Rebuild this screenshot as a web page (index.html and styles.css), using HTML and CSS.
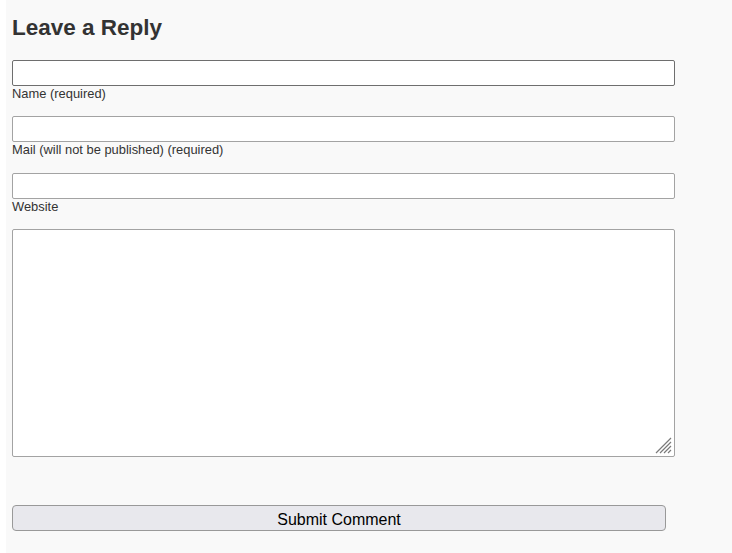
FILE: index.html
```html
<!DOCTYPE html>
<html lang="en">
<head>
    <meta charset="UTF-8">
    <meta name="viewport" content="width=device-width, initial-scale=1.0">
    <title>Leave a Reply</title>
    <link rel="stylesheet" href="styles.css">
</head>
<body>
    <div class="page">
        <div class="respond">
            <h3 class="reply-title">Leave a Reply</h3>
            <form class="comment-form" action="#" method="post">
                <div class="field">
                    <input type="text" id="author" name="author" class="active">
                    <label for="author">Name (required)</label>
                </div>
                <div class="field">
                    <input type="text" id="email" name="email">
                    <label for="email">Mail (will not be published) (required)</label>
                </div>
                <div class="field">
                    <input type="text" id="url" name="url">
                    <label for="url">Website</label>
                </div>
                <div class="comment-box">
                    <textarea id="comment" name="comment"></textarea>
                    <!-- resize grip -->
                    <svg class="grip" width="18" height="18" viewBox="0 0 18 18">
                        <path d="M2 17 L17 2 M6 17 L17 6 M10 17 L17 10 M14 17 L17 14" stroke="#7a7a7a" stroke-width="1.2" fill="none"/>
                    </svg>
                </div>
                <button type="submit" class="submit">Submit Comment</button>
            </form>
        </div>
    </div>
</body>
</html>
```

FILE: styles.css
```css
body {
    margin: 0;
    padding: 0;
    background-color: #fff;
    font-family: 'Liberation Sans', Arial, sans-serif;
    color: #333;
}
.page {
    margin-left: 6px;
    min-height: 553px;
    background-color: #f9f9f9;
}
.respond {
    padding: 15px 0 0 6px;
    width: 663px;
}
.reply-title {
    margin: 0 0 19px 0;
    font-size: 22.5px;
    line-height: 26px;
    font-weight: bold;
    color: #333;
}
.field {
    height: 40px;
    margin-bottom: 16px;
}
.field:nth-child(2) {
    margin-bottom: 17px;
}
.field input {
    display: block;
    box-sizing: border-box;
    width: 663px;
    height: 26px;
    margin: 0;
    padding: 2px 4px;
    border: 1px solid #a3a3a3;
    border-radius: 2px;
    background-color: #fff;
    font-family: inherit;
    font-size: 13px;
}
.field input.active {
    border-color: #6e6e6e;
}
.field label {
    display: block;
    font-size: 12.9px;
    line-height: 14px;
    padding-top: 1px;
    color: #333;
}
.comment-box {
    position: relative;
    width: 663px;
}
textarea {
    display: block;
    box-sizing: border-box;
    width: 663px;
    height: 228px;
    margin: 0;
    border: 1px solid #a3a3a3;
    border-radius: 2px;
    background-color: #fff;
    resize: none;
}
.grip {
    position: absolute;
    right: 3px;
    bottom: 3px;
    pointer-events: none;
}
.submit {
    display: block;
    box-sizing: border-box;
    width: 654px;
    height: 26px;
    margin-top: 48px;
    padding: 3px 0 0 0;
    border: 1px solid #999;
    border-radius: 4px;
    background-color: #e8e8ed;
    font-family: 'Liberation Sans', Tahoma, sans-serif;
    font-size: 16px;
    color: #000;
}
```
